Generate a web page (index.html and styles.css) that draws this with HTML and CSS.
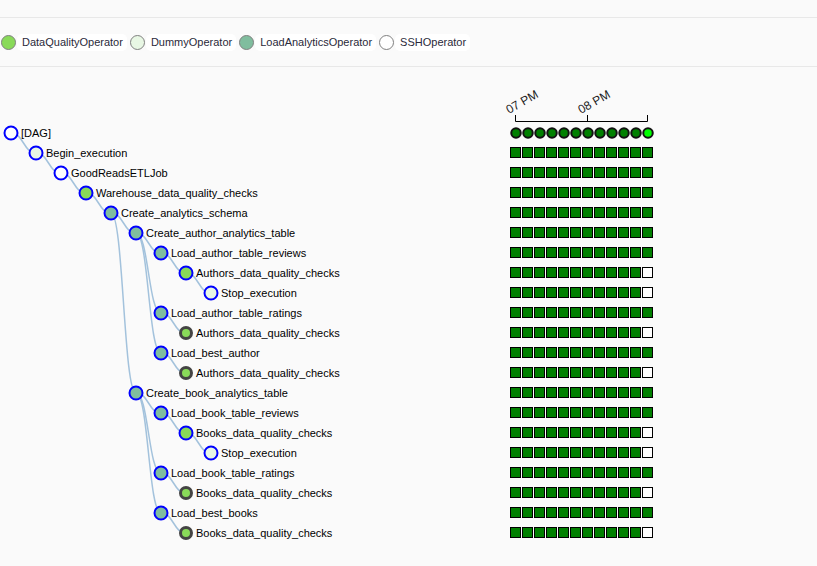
FILE: index.html
```html
<!DOCTYPE html>
<html>
<head>
<meta charset="utf-8">
<link rel="stylesheet" href="styles.css">
</head>
<body>
<div class="legend">
  <span class="dot dq"></span><span class="item">DataQualityOperator</span>
  <span class="dot dummy"></span><span class="item">DummyOperator</span>
  <span class="dot la"></span><span class="item">LoadAnalyticsOperator</span>
  <span class="dot ssh"></span><span class="item">SSHOperator</span>
</div>
<svg class="chart" width="817" height="499" viewBox="0 67 817 499" xmlns="http://www.w3.org/2000/svg">
  <defs>
    <g id="sqrow">
      <rect class="sq" x="510.5" y="0.5" width="10" height="10"/>
      <rect class="sq" x="522.5" y="0.5" width="10" height="10"/>
      <rect class="sq" x="534.5" y="0.5" width="10" height="10"/>
      <rect class="sq" x="546.5" y="0.5" width="10" height="10"/>
      <rect class="sq" x="558.5" y="0.5" width="10" height="10"/>
      <rect class="sq" x="570.5" y="0.5" width="10" height="10"/>
      <rect class="sq" x="582.5" y="0.5" width="10" height="10"/>
      <rect class="sq" x="594.5" y="0.5" width="10" height="10"/>
      <rect class="sq" x="606.5" y="0.5" width="10" height="10"/>
      <rect class="sq" x="618.5" y="0.5" width="10" height="10"/>
      <rect class="sq" x="630.5" y="0.5" width="10" height="10"/>
      <rect class="sq" x="642.5" y="0.5" width="10" height="10"/>
    </g>
  </defs>

  <g class="links">
    <path d="M11,133C23.5,133 23.5,153 36,153"/>
    <path d="M36,153C48.5,153 48.5,173 61,173"/>
    <path d="M61,173C73.5,173 73.5,193 86,193"/>
    <path d="M86,193C98.5,193 98.5,213 111,213"/>
    <path d="M111,213C123.5,213 123.5,233 136,233"/>
    <path d="M111,213C123.5,213 123.5,393 136,393"/>
    <path d="M136,233C148.5,233 148.5,253 161,253"/>
    <path d="M136,233C148.5,233 148.5,313 161,313"/>
    <path d="M136,233C148.5,233 148.5,353 161,353"/>
    <path d="M161,253C173.5,253 173.5,273 186,273"/>
    <path d="M186,273C198.5,273 198.5,293 211,293"/>
    <path d="M161,313C173.5,313 173.5,333 186,333"/>
    <path d="M161,353C173.5,353 173.5,373 186,373"/>
    <path d="M136,393C148.5,393 148.5,413 161,413"/>
    <path d="M136,393C148.5,393 148.5,473 161,473"/>
    <path d="M136,393C148.5,393 148.5,513 161,513"/>
    <path d="M161,413C173.5,413 173.5,433 186,433"/>
    <path d="M186,433C198.5,433 198.5,453 211,453"/>
    <path d="M161,473C173.5,473 173.5,493 186,493"/>
    <path d="M161,513C173.5,513 173.5,533 186,533"/>
  </g>

  <g class="nodes">
    <circle class="node ssh" cx="11" cy="133" r="6.5"/><text x="21" y="137">[DAG]</text>
    <circle class="node dummy" cx="36" cy="153" r="6.5"/><text x="46" y="157">Begin_execution</text>
    <circle class="node ssh" cx="61" cy="173" r="6.5"/><text x="71" y="177">GoodReadsETLJob</text>
    <circle class="node dq" cx="86" cy="193" r="6.5"/><text x="96" y="197">Warehouse_data_quality_checks</text>
    <circle class="node la" cx="111" cy="213" r="6.5"/><text x="121" y="217">Create_analytics_schema</text>
    <circle class="node la" cx="136" cy="233" r="6.5"/><text x="146" y="237">Create_author_analytics_table</text>
    <circle class="node la" cx="161" cy="253" r="6.5"/><text x="171" y="257">Load_author_table_reviews</text>
    <circle class="node dq" cx="186" cy="273" r="6.5"/><text x="196" y="277">Authors_data_quality_checks</text>
    <circle class="node dummy" cx="211" cy="293" r="6.5"/><text x="221" y="297">Stop_execution</text>
    <circle class="node la" cx="161" cy="313" r="6.5"/><text x="171" y="317">Load_author_table_ratings</text>
    <circle class="node dq collapsed" cx="186" cy="333" r="5.5"/><text x="196" y="337">Authors_data_quality_checks</text>
    <circle class="node la" cx="161" cy="353" r="6.5"/><text x="171" y="357">Load_best_author</text>
    <circle class="node dq collapsed" cx="186" cy="373" r="5.5"/><text x="196" y="377">Authors_data_quality_checks</text>
    <circle class="node la" cx="136" cy="393" r="6.5"/><text x="146" y="397">Create_book_analytics_table</text>
    <circle class="node la" cx="161" cy="413" r="6.5"/><text x="171" y="417">Load_book_table_reviews</text>
    <circle class="node dq" cx="186" cy="433" r="6.5"/><text x="196" y="437">Books_data_quality_checks</text>
    <circle class="node dummy" cx="211" cy="453" r="6.5"/><text x="221" y="457">Stop_execution</text>
    <circle class="node la" cx="161" cy="473" r="6.5"/><text x="171" y="477">Load_book_table_ratings</text>
    <circle class="node dq collapsed" cx="186" cy="493" r="5.5"/><text x="196" y="497">Books_data_quality_checks</text>
    <circle class="node la" cx="161" cy="513" r="6.5"/><text x="171" y="517">Load_best_books</text>
    <circle class="node dq collapsed" cx="186" cy="533" r="5.5"/><text x="196" y="537">Books_data_quality_checks</text>
  </g>

  <g class="axis">
    <path d="M515.5,115V121.5H647.5V115"/>
    <path d="M587.5,115V121.5"/>
    <text transform="translate(509,114) rotate(-30)">07 PM</text>
    <text transform="translate(581,114) rotate(-30)">08 PM</text>
  </g>

  <g class="runs">
    <circle class="run" cx="516" cy="133" r="4.75"/>
    <circle class="run" cx="528" cy="133" r="4.75"/>
    <circle class="run" cx="540" cy="133" r="4.75"/>
    <circle class="run" cx="552" cy="133" r="4.75"/>
    <circle class="run" cx="564" cy="133" r="4.75"/>
    <circle class="run" cx="576" cy="133" r="4.75"/>
    <circle class="run" cx="588" cy="133" r="4.75"/>
    <circle class="run" cx="600" cy="133" r="4.75"/>
    <circle class="run" cx="612" cy="133" r="4.75"/>
    <circle class="run" cx="624" cy="133" r="4.75"/>
    <circle class="run" cx="636" cy="133" r="4.75"/>
    <circle class="run running" cx="648" cy="133" r="4.75"/>
  </g>

  <g class="grid">
    <use href="#sqrow" y="147"/>
    <use href="#sqrow" y="167"/>
    <use href="#sqrow" y="187"/>
    <use href="#sqrow" y="207"/>
    <use href="#sqrow" y="227"/>
    <use href="#sqrow" y="247"/>
    <use href="#sqrow" y="267"/>
    <use href="#sqrow" y="287"/>
    <use href="#sqrow" y="307"/>
    <use href="#sqrow" y="327"/>
    <use href="#sqrow" y="347"/>
    <use href="#sqrow" y="367"/>
    <use href="#sqrow" y="387"/>
    <use href="#sqrow" y="407"/>
    <use href="#sqrow" y="427"/>
    <use href="#sqrow" y="447"/>
    <use href="#sqrow" y="467"/>
    <use href="#sqrow" y="487"/>
    <use href="#sqrow" y="507"/>
    <use href="#sqrow" y="527"/>
    <rect class="sq none" x="642.5" y="267.5" width="10" height="10"/>
    <rect class="sq none" x="642.5" y="287.5" width="10" height="10"/>
    <rect class="sq none" x="642.5" y="327.5" width="10" height="10"/>
    <rect class="sq none" x="642.5" y="367.5" width="10" height="10"/>
    <rect class="sq none" x="642.5" y="427.5" width="10" height="10"/>
    <rect class="sq none" x="642.5" y="447.5" width="10" height="10"/>
    <rect class="sq none" x="642.5" y="487.5" width="10" height="10"/>
    <rect class="sq none" x="642.5" y="527.5" width="10" height="10"/>
  </g>
</svg>
</body>
</html>
```
FILE: styles.css
```css
html, body {
  margin: 0;
  padding: 0;
  background: #fafafa;
  font-family: "Liberation Sans", Arial, sans-serif;
  overflow: hidden;
}

.legend {
  display: flex;
  align-items: center;
  margin-top: 17px;
  height: 48px;
  padding-left: 1px;
  border-top: 1px solid #e8e8e8;
  border-bottom: 1px solid #e8e8e8;
}

.dot {
  display: inline-block;
  width: 13px;
  height: 13px;
  border: 1px solid #808080;
  border-radius: 50%;
  margin-right: 1px;
}

.dot.dq { background: #89da59; }
.dot.dummy { background: #e8f7e4; }
.dot.la { background: #80bd9e; }
.dot.ssh { background: #ffffff; }

.item {
  background: #ffffff;
  border-radius: 5px;
  padding: 2px 4px 2px 5px;
  margin-right: 3px;
  font-size: 11px;
  line-height: 13px;
  color: #2a2a3a;
}

.chart {
  display: block;
}

.links path {
  fill: none;
  stroke: #a3c2dc;
  stroke-width: 1.5px;
}

.node {
  stroke: #0000ff;
  stroke-width: 2px;
}

.node.ssh { fill: #ffffff; }
.node.dummy { fill: #e8f7e4; }
.node.dq { fill: #89da59; }
.node.la { fill: #80bd9e; }

.node.collapsed {
  stroke: #444444;
  stroke-width: 3px;
}

.nodes text {
  font-family: "Liberation Sans", Arial, sans-serif;
  font-size: 11px;
  fill: #000000;
}

.axis path {
  fill: none;
  stroke: #000000;
  stroke-width: 1px;
}

.axis text {
  font-family: "Liberation Sans", Arial, sans-serif;
  font-size: 12px;
  fill: #1a1a1a;
}

.run {
  fill: #008000;
  stroke: #111111;
  stroke-width: 2px;
}

.run.running {
  fill: #00ff00;
}

.sq {
  fill: #008000;
  stroke: #000000;
  stroke-width: 1px;
}

.sq.none {
  fill: #ffffff;
}
```
